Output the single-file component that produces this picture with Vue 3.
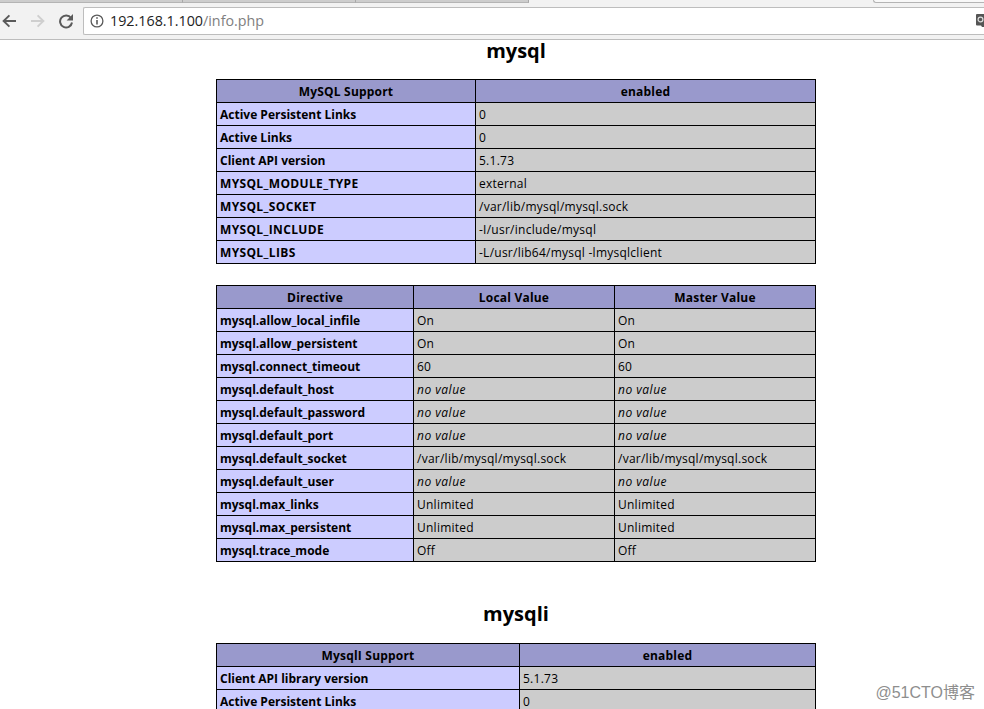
<script setup>
const t1 = [['Active Persistent Links','0'],['Active Links','0'],['Client API version','5.1.73'],['MYSQL_MODULE_TYPE','external'],['MYSQL_SOCKET','/var/lib/mysql/mysql.sock'],['MYSQL_INCLUDE','-I/usr/include/mysql'],['MYSQL_LIBS','-L/usr/lib64/mysql -lmysqlclient']]
const nv = 'no value'
const t2 = [['mysql.allow_local_infile','On','On'],['mysql.allow_persistent','On','On'],['mysql.connect_timeout','60','60'],['mysql.default_host',nv,nv],['mysql.default_password',nv,nv],['mysql.default_port',nv,nv],['mysql.default_socket','/var/lib/mysql/mysql.sock','/var/lib/mysql/mysql.sock'],['mysql.default_user',nv,nv],['mysql.max_links','Unlimited','Unlimited'],['mysql.max_persistent','Unlimited','Unlimited'],['mysql.trace_mode','Off','Off']]
const t3 = [['Client API library version','5.1.73'],['Active Persistent Links','0']]
const isCaps = (s) => s === s.toUpperCase()
</script>

<template>
  <div class="window">
    <div class="tabstrip">
      <span class="tab t1"></span>
      <span class="tab t2"></span>
      <span class="tab t3"></span>
      <span class="gap"></span>
      <span class="tab-end"></span>
    </div>
    <header class="toolbar">
      <svg class="nav" viewBox="0 0 16 16" width="16" height="16"><path d="M15 8H3M8.4 2.4 2.6 8l5.8 5.6" fill="none" stroke="#5a5a5a" stroke-width="1.9"/></svg>
      <svg class="nav fwd" viewBox="0 0 16 16" width="16" height="16"><path d="M1 8h12M7.6 2.4 13.4 8l-5.8 5.6" fill="none" stroke="#cfcfcf" stroke-width="1.9"/></svg>
      <svg class="nav reload" viewBox="0 0 16 16" width="16" height="16"><path d="M13 5A6 6 0 1 0 14 9.5" fill="none" stroke="#5a5a5a" stroke-width="2"/><path d="M15 1v6.4H8.6z" fill="#5a5a5a"/></svg>
      <div class="omnibox">
        <svg class="info" viewBox="0 0 14 14" width="14" height="14"><circle cx="7" cy="7" r="5.9" fill="none" stroke="#5a5a5a" stroke-width="1.3"/><path d="M7 6v4.6M7 3.2v1.6" stroke="#5a5a5a" stroke-width="1.6"/></svg>
        <span class="url"><span class="host">192.168.1.100</span><span class="path">/info.php</span></span>
        <svg class="ext" viewBox="0 0 8 13" width="8" height="13"><path d="M1 0h7v13H6l-1-1.5H1a1 1 0 0 1-1-1V1a1 1 0 0 1 1-1z" fill="#555"/><circle cx="4.5" cy="5.5" r="2.4" fill="none" stroke="#ddd" stroke-width="1.2"/></svg>
      </div>
    </header>
    <main class="page">
      <h2 class="first">mysql</h2>
      <table class="t-a">
        <tbody>
          <tr class="h"><th>MySQL Support</th><th>enabled</th></tr>
          <tr v-for="r in t1" :key="r[0]"><td class="e" :class="{ caps: isCaps(r[0]) }">{{ r[0] }}</td><td class="v">{{ r[1] }}</td></tr>
        </tbody>
      </table>
      <table class="t-b">
        <tbody>
          <tr class="h"><th>Directive</th><th>Local Value</th><th>Master Value</th></tr>
          <tr v-for="r in t2" :key="r[0]">
            <td class="e">{{ r[0] }}</td>
            <td class="v" v-for="(c, i) in r.slice(1)" :key="i"><i v-if="c === nv">{{ c }}</i><template v-else>{{ c }}</template></td>
          </tr>
        </tbody>
      </table>
      <h2 class="second">mysqli</h2>
      <table class="t-c">
        <tbody>
          <tr class="h"><th>MysqlI Support</th><th>enabled</th></tr>
          <tr v-for="r in t3" :key="r[0]"><td class="e">{{ r[0] }}</td><td class="v">{{ r[1] }}</td></tr>
        </tbody>
      </table>
    </main>
    <div class="watermark">@51CTO博客</div>
  </div>
</template>

<style>
html, body { margin: 0; overflow: hidden; background: #fff; }
</style>

<style scoped>
.window { width: 984px; height: 709px; overflow: hidden; position: relative; background: #fff; font-family: "Open Sans", "DejaVu Sans", sans-serif; }
.tabstrip { height: 3px; background: #f2f2f2; display: flex; }
.tab { display: block; height: 2px; background: #cdcdcd; border-bottom: 1px solid #b4b4b4; border-right: 1px solid #a8a8a8; box-sizing: content-box; }
.t1 { width: 182px; }
.t2 { width: 172px; }
.t3 { width: 172px; }
.gap { flex: 1; }
.tab-end { display: block; width: 110px; height: 2px; background: #f8f8f8; border-left: 1px solid #b4b4b4; border-bottom: 1px solid #b4b4b4; border-bottom-left-radius: 3px; }
.toolbar { height: 36px; background: #f2f2f2; border-bottom: 1px solid #bdbdbd; display: flex; align-items: flex-start; }
.nav { flex: none; margin-left: 1px; margin-top: 10px; }
.fwd { margin-left: 13px; }
.reload { margin-left: 12px; }
.omnibox { flex: 1; margin-left: 9px; margin-top: 4px; height: 28px; background: #fff; border: 1px solid #bdbdbd; border-right: none; border-radius: 2px 0 0 2px; display: flex; align-items: center; box-sizing: border-box; padding-left: 6px; position: relative; }
.info { flex: none; }
.url { margin-left: 6px; font-size: 14.3px; line-height: 20px; margin-top: -1px; }
.host { color: #222; }
.path { color: #808080; }
.ext { position: absolute; right: 0; top: 6px; }
.page { width: 600px; margin-left: 216px; color: #000; }
h2 { margin: 0; text-align: center; font-size: 20px; font-weight: 700; line-height: 22px; }
.first { height: 39px; }
.second { margin-top: 41px; height: 40px; }
table { border-collapse: collapse; width: 600px; table-layout: fixed; font-size: 12px; }
.t-b { margin-top: 21px; }
th, td { border: 1px solid #000; height: 23px; padding: 1px 3px 0; line-height: 14px; box-sizing: border-box; white-space: nowrap; overflow: hidden; }
th { background: #9999cc; font-weight: 700; text-align: center; letter-spacing: 0.2px; }
.e { background: #ccccff; font-weight: 700; }
.caps { letter-spacing: 0.35px; }
.v { background: #cccccc; letter-spacing: 0.25px; }
.v i { letter-spacing: 0.5px; }
.t-a th:first-child { width: 259px; }
.t-b th:first-child { width: 197px; }
.t-b th:nth-child(2) { width: 201px; }
.t-c th:first-child { width: 303px; }
.watermark { position: absolute; right: 9px; top: 679px; font-family: "Liberation Sans", "Noto Sans CJK SC", sans-serif; font-size: 16px; color: #8e8e8e; }
</style>
